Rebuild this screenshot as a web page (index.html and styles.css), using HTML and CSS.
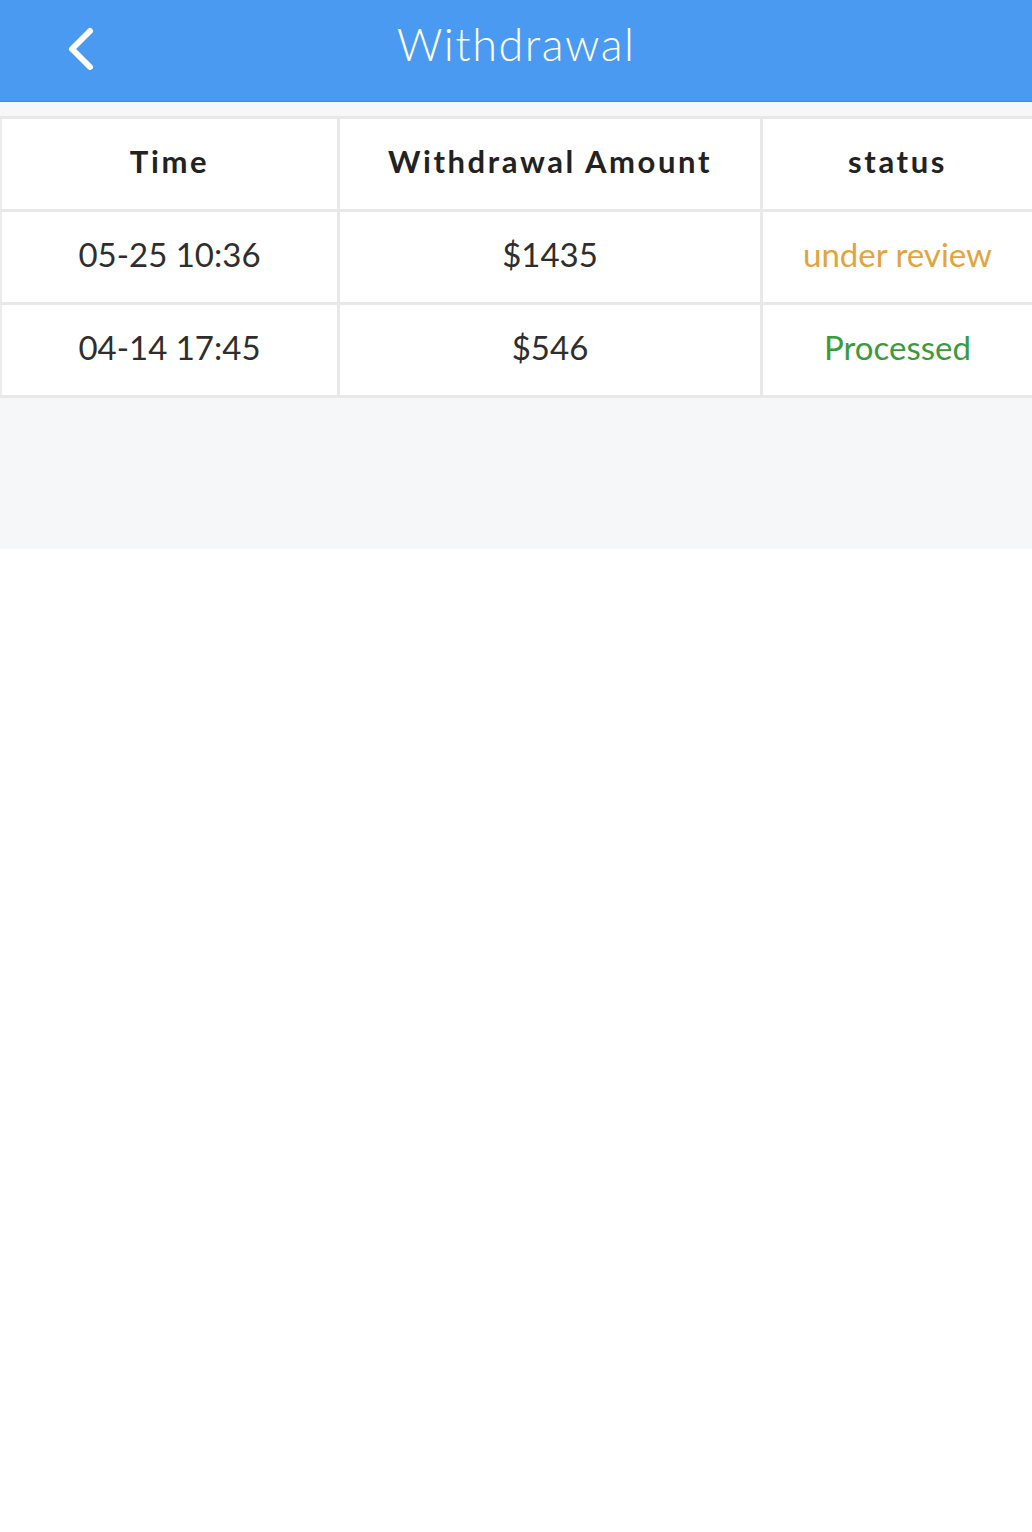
FILE: index.html
```html
<!DOCTYPE html>
<html lang="en">
<head>
    <meta charset="UTF-8">
    <meta name="viewport" content="width=device-width, initial-scale=1.0">
    <title>Withdrawal</title>
    <link rel="stylesheet" href="styles.css">
</head>
<body>
    <header class="topbar">
        <a class="back" href="#">
            <svg width="34" height="46" viewBox="0 0 34 46">
                <path d="M27 5 L9 23 L27 41" fill="none" stroke="#fff" stroke-width="6" stroke-linecap="round" stroke-linejoin="round"/>
            </svg>
        </a>
        <h1 class="title">Withdrawal</h1>
    </header>

    <section class="records">
        <table class="list">
            <tr>
                <th class="c1">Time</th>
                <th class="c2">Withdrawal Amount</th>
                <th class="c3">status</th>
            </tr>
            <tr>
                <td>05-25 10:36</td>
                <td>$1435</td>
                <td class="review">under review</td>
            </tr>
            <tr>
                <td>04-14 17:45</td>
                <td>$546</td>
                <td class="done">Processed</td>
            </tr>
        </table>
    </section>
</body>
</html>
```

FILE: styles.css
```css
body {
    margin: 0;
    background: #fff;
    font-family: "Lato", "Noto Sans", sans-serif;
    color: #2b2b2b;
}

.topbar {
    position: relative;
    height: 101px;
    background-color: #4b9af1;
    display: flex;
    align-items: center;
    justify-content: center;
    border-bottom: 1px solid #3d8ae6;
}

.back {
    position: absolute;
    left: 63px;
    top: 26px;
    display: block;
}

.title {
    margin: 0 0 14px 0;
    color: #fff;
    font-weight: 300;
    font-size: 45px;
    letter-spacing: 1.5px;
}

.records {
    background-color: #f6f7f9;
    padding-top: 14px;
    height: 433px;
}

.list {
    width: 100%;
    border-collapse: collapse;
    background: #fff;
}

.list th,
.list td {
    height: 84px;
    text-align: center;
    vertical-align: middle;
    border: 3px solid #e8e8e8;
    padding: 0 0 6px 0;
}

.list tr > :first-child {
    border-left: 2px solid #ececec;
}

.list tr > :last-child {
    border-right: none;
}

.list th {
    font-size: 31px;
    font-weight: 700;
    letter-spacing: 2.6px;
    color: #222;
}

.list td {
    font-size: 33px;
    color: #2e2e2e;
}

.c1 {
    width: 335px;
}

.c2 {
    width: 420px;
}

.list td.review {
    color: #e2a43c;
}

.list td.done {
    color: #3b9b3b;
}
```
